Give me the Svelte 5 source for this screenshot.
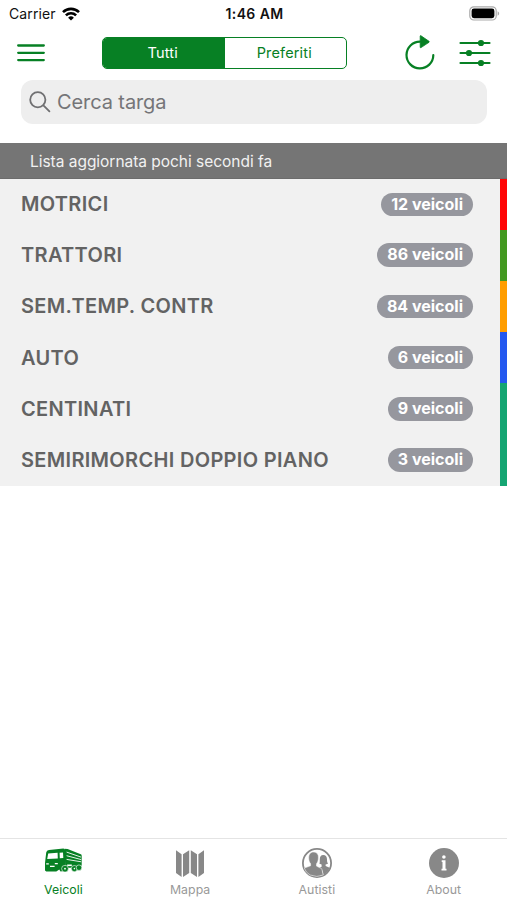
<script lang="ts">
  interface Group {
    name: string;
    count: number;
    color: string;
  }

  const groups: Group[] = [
    { name: 'MOTRICI', count: 12, color: '#ff0505' },
    { name: 'TRATTORI', count: 86, color: '#429821' },
    { name: 'SEM.TEMP. CONTR', count: 84, color: '#ff9d00' },
    { name: 'AUTO', count: 6, color: '#2458ef' },
    { name: 'CENTINATI', count: 9, color: '#15a572' },
    { name: 'SEMIRIMORCHI DOPPIO PIANO', count: 3, color: '#15a572' }
  ];

  const tabs = [
    { id: 'vehicles', label: 'Veicoli' },
    { id: 'map', label: 'Mappa' },
    { id: 'drivers', label: 'Autisti' },
    { id: 'about', label: 'About' }
  ];

  let filter = $state('Tutti');
  let activeTab = $state('vehicles');
</script>

<div class="screen">
  <div class="status-bar">
    <div class="carrier">
      <span>Carrier</span>
      <svg width="18" height="14" viewBox="0 0 18 14" fill="none" stroke="#000" stroke-width="2.6">
        <path d="M1 5.1a11.5 11.5 0 0 1 16 0" />
        <path d="M3.9 8.4a7.3 7.3 0 0 1 10.2 0" />
        <path d="M9 13.6 6.1 10.7a4.1 4.1 0 0 1 5.8 0z" fill="#000" stroke="none" />
      </svg>
    </div>
    <span class="time">1:46 AM</span>
    <svg class="battery" width="31" height="15" viewBox="0 0 31 15">
      <rect x="0.8" y="0.8" width="26.4" height="13.2" rx="4" fill="#fff" stroke="#aaa" stroke-width="1.2" />
      <rect x="2.6" y="2.6" width="22.8" height="9.6" rx="2.4" fill="#000" />
      <path d="M28.6 5.2v4.5c2-.8 2-3.7 0-4.5z" fill="#aaa" />
    </svg>
  </div>

  <header class="nav-bar">
    <button class="icon-button" aria-label="Menu">
      <svg width="28" height="20" viewBox="0 0 28 20" stroke="#078024" stroke-width="2.3" stroke-linecap="round">
        <path d="M1.2 2.5h25.6M1.2 9.8h25.6M1.2 17.1h25.6" />
      </svg>
    </button>
    <div class="segmented">
      {#each ['Tutti', 'Preferiti'] as option}
        <button class:selected={filter === option} onclick={() => (filter = option)}>{option}</button>
      {/each}
    </div>
    <div class="actions">
      <button class="icon-button" aria-label="Aggiorna">
        <svg width="30" height="35" viewBox="0 0 30 35">
          <path d="M28.3 20.2A13.4 13.4 0 1 1 15 6.6" fill="none" stroke="#078024" stroke-width="2.2" stroke-linecap="round" />
          <path d="M15.2 1.2Q15.2.3 16 .8l8 5.5q.7.5 0 1l-8 5.3q-.8.5-.8-.5z" fill="#078024" stroke="#078024" stroke-width="0.8" />
        </svg>
      </button>
      <button class="icon-button" aria-label="Filtri">
        <svg width="32" height="28" viewBox="0 0 32 28" stroke="#078024" stroke-width="2.2" stroke-linecap="round">
          <path d="M1.5 4h29M1.5 14h29M1.5 24h29" />
          <g fill="#078024" stroke="none">
            <circle cx="22" cy="4" r="3.1" />
            <circle cx="10" cy="14" r="3.1" />
            <circle cx="22" cy="24" r="3.1" />
          </g>
        </svg>
      </button>
    </div>
  </header>

  <div class="search">
    <svg width="22" height="22" viewBox="0 0 22 22" fill="none" stroke="#707072" stroke-width="1.8" stroke-linecap="round">
      <circle cx="8.8" cy="8.8" r="7.6" />
      <path d="m14.4 14.4 6 6" />
    </svg>
    <span>Cerca targa</span>
  </div>

  <div class="updated">Lista aggiornata pochi secondi fa</div>

  <div class="list">
    {#each groups as group}
      <div class="row">
        <span class="name">{group.name}</span>
        <span class="badge">{group.count} veicoli</span>
        <span class="stripe" style="background-color: {group.color}"></span>
      </div>
    {/each}
  </div>

  <nav class="tab-bar">
    {#each tabs as tab}
      <button class="tab" class:active={activeTab === tab.id} onclick={() => (activeTab = tab.id)}>
        {#if tab.id === 'vehicles'}
          <svg width="38" height="32" viewBox="0 0 38 32" fill="currentColor">
            <!-- cab -->
            <path d="M2.2 5.6Q2.6 3.4 5 3L19.5 1.6l1.8 1.2v21l-4.8.6-1.2-1.8-3 1.8-10 .2-1.3-1V16z" />
            <path d="m4.2 6.4 9.4-.6.2 5.8-10.6.5zM15.6 5.8l3.4-.2.3 5.3-3.5.4z" fill="#fff" />
            <path d="M2.2 16.9h2.6M10.8 16.6h3M6 19.4h4.6" fill="none" stroke="#fff" stroke-width="1.1" />
            <!-- trailer -->
            <path d="M20.5 1.7 23.6 2l13.2 5.3q.9.4.9 1.4v9.8l-2.6 1.8-13.8.8z" />
            <path d="m22.6 5.1 14.4 5M22.6 8.7l14.6 3.9M22.6 12.4l14.6 2.4" fill="none" stroke="#fff" stroke-width=".9" />
            <path d="M23.2 18.3h4.6" fill="none" stroke="#fff" stroke-width="1.6" />
            <!-- wheels -->
            <g stroke="#fff" stroke-width=".6">
              <circle cx="21" cy="21.7" r="3.4" />
              <circle cx="30.4" cy="21.6" r="3.1" />
              <circle cx="35" cy="20.7" r="2.8" />
            </g>
            <circle cx="21" cy="21.7" r=".9" fill="#fff" />
            <circle cx="30.4" cy="21.6" r=".8" fill="#fff" />
          </svg>
        {:else if tab.id === 'map'}
          <svg width="30" height="32" viewBox="0 0 30 32" fill="currentColor">
            <path d="m1 3.3 5.6 4v22.8L1 26zM8 7.3l6.2-4V26L8 30.1zM15.8 3.3l6.2 4v22.8L15.8 26zM23.4 7.3l5.6-4V26l-5.6 4.1z" />
          </svg>
        {:else if tab.id === 'drivers'}
          <svg width="32" height="32" viewBox="0 0 32 32">
            <circle cx="16" cy="16" r="14.1" fill="none" stroke="currentColor" stroke-width="1.8" />
            <g fill="currentColor">
              <path d="M22.2 8c2.6 0 3.9 1.9 3.8 4.4-.1 2.1.5 3.3 1 4.3l-2.4.8v1.6l4 1.7q-1.6 4.6-6.1 7.1l-1.1-4.3-3.8-2.3 3-1.6v-2.2l-2.2-.8c.5-1 .4-2.3.4-4.3 0-2.7 1-4.4 3.4-4.4z" />
              <path d="M12.6 5.1c3.5 0 5.1 2.4 4.8 5.9-.1 2.7-.9 4.6-1.9 5.7v2.4l5.3 2.7 1.4 6.2Q15.8 30.8 9.2 28 4.6 25.5 3.3 21.1l6.3-2.3v-2.2c-1.2-1.2-1.8-3-1.9-5.3-.2-3.6 1.5-6.2 4.9-6.2z" stroke="#fff" stroke-width=".5" />
            </g>
          </svg>
        {:else}
          <svg width="32" height="32" viewBox="0 0 32 32">
            <circle cx="16" cy="16" r="15" fill="currentColor" />
            <circle cx="15.9" cy="10" r="1.8" fill="#fff" />
            <path d="M13.7 13.3h3.8v8.4h1v1.7h-5v-1.7h1v-6.7h-.8z" fill="#fff" />
          </svg>
        {/if}
        <span>{tab.label}</span>
      </button>
    {/each}
  </nav>
</div>

<style>
  :global(body) {
    background: #fff;
  }

  .screen {
    display: flex;
    flex-direction: column;
    box-sizing: border-box;
    width: 507px;
    height: 900px;
    overflow: hidden;
    font-family: Inter, 'Liberation Sans', sans-serif;
  }

  button {
    padding: 0;
    border: 0;
    background: none;
    font-family: inherit;
    cursor: pointer;
  }

  svg {
    display: block;
    flex: none;
  }

  .status-bar {
    display: grid;
    grid-template-columns: 1fr auto 1fr;
    align-items: center;
    height: 27px;
    padding: 0 7px 0 9px;
    font-size: 14px;
    color: #111;
  }

  .carrier {
    display: flex;
    align-items: center;
    gap: 6px;
    letter-spacing: 0.1px;
  }

  .time {
    font-weight: 600;
    letter-spacing: 0.4px;
  }

  .battery {
    justify-self: end;
  }

  .nav-bar {
    display: grid;
    grid-template-columns: 85px 245px 1fr;
    align-items: center;
    height: 53px;
    padding: 0 16px 2px 17px;
    box-sizing: border-box;
  }

  .segmented {
    display: flex;
    box-sizing: border-box;
    height: 32px;
    border: 1.5px solid #078024;
    border-radius: 5px;
    overflow: hidden;
  }

  .segmented button {
    flex: 1;
    padding-right: 2px;
    color: #078024;
    font-size: 14.5px;
    letter-spacing: 0.15px;
  }

  .segmented .selected {
    background: #078024;
    color: #fff;
  }

  .actions {
    display: flex;
    justify-content: flex-end;
    align-items: center;
    gap: 24px;
  }

  .search {
    display: flex;
    align-items: center;
    gap: 6px;
    box-sizing: border-box;
    height: 44px;
    margin: 0 20px 0 21px;
    padding-left: 8px;
    border-radius: 12px;
    background: #eee;
    color: #757578;
    font-size: 20px;
    letter-spacing: -0.1px;
  }

  .updated {
    box-sizing: border-box;
    height: 36px;
    margin-top: 19px;
    padding-left: 30px;
    border-bottom: 1px solid #6c6c6c;
    background: #757575;
    color: #f1f1f1;
    font-size: 15.5px;
    line-height: 37px;
    letter-spacing: -0.03px;
  }

  .list {
    display: grid;
    grid-template-rows: 50.5px repeat(5, 51.25px);
    background: #f1f1f1;
  }

  .row {
    display: flex;
    align-items: center;
    padding-left: 21px;
  }

  .name {
    flex: 1;
    color: #636363;
    font-size: 20px;
    font-weight: 600;
    letter-spacing: 0.32px;
  }

  .badge {
    height: 23.5px;
    margin-right: 27px;
    padding: 0 10px;
    border-radius: 12px;
    background: #96979e;
    color: #fff;
    font-size: 16px;
    font-weight: 700;
    line-height: 23.5px;
  }

  .stripe {
    align-self: stretch;
    width: 7px;
  }

  .tab-bar {
    display: flex;
    box-sizing: border-box;
    height: 62px;
    margin-top: auto;
    border-top: 1px solid #e4e4e4;
  }

  .tab {
    display: flex;
    flex: 1;
    flex-direction: column;
    align-items: center;
    padding-top: 8px;
    color: #888;
    font-size: 12.3px;
  }

  .tab span {
    margin-top: 3px;
    color: #999;
    line-height: 16px;
    letter-spacing: 0.05px;
  }

  .active,
  .tab.active span {
    color: #078024;
  }
</style>
